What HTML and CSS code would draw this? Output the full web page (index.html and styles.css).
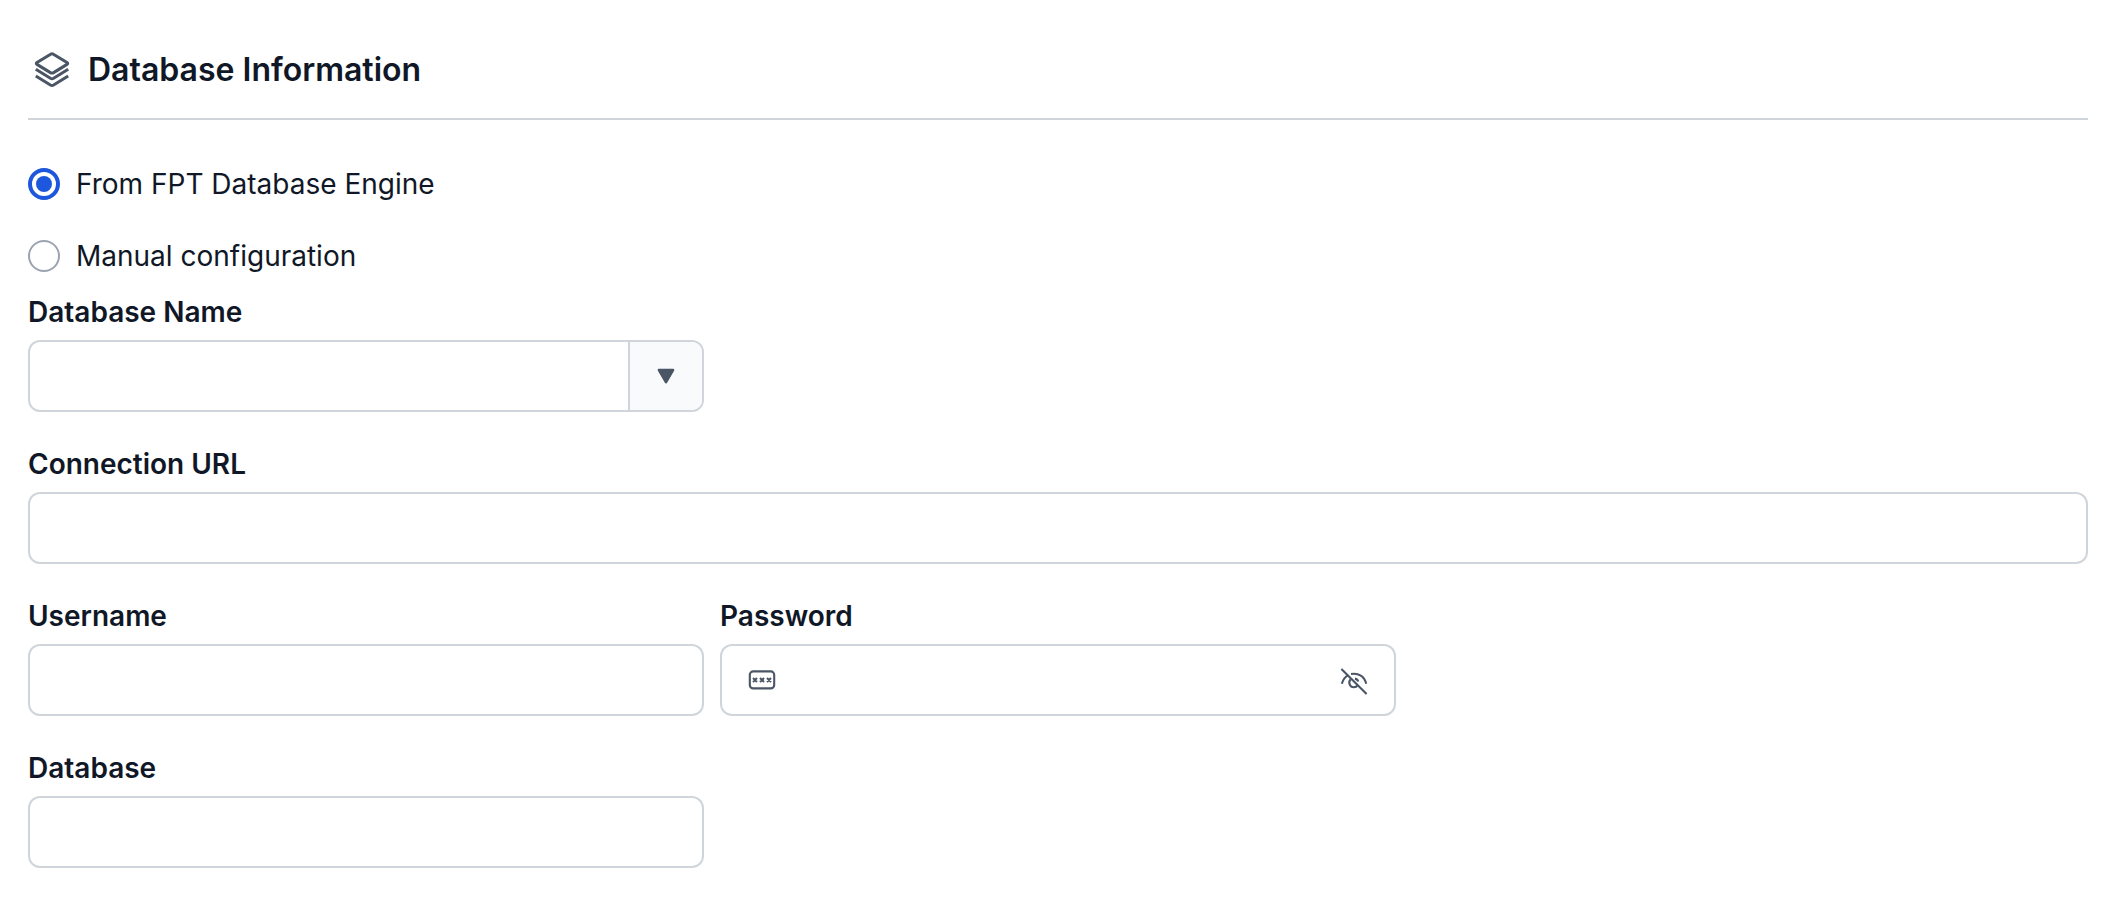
FILE: index.html
```html
<!DOCTYPE html>
<html lang="en">
<head>
  <meta charset="UTF-8">
  <title>Database Information</title>
  <link rel="stylesheet" href="styles.css">
</head>
<body>
  <form class="db-form">
    <header class="section-header">
      <svg class="layers-icon" viewBox="0 0 36 36">
        <path d="M16.6 2.2 Q18 1.3 19.4 2.2 L33 10.4 Q34.4 11.4 33 12.4 L19.6 20.6 Q18 21.5 16.4 20.6 L3 12.4 Q1.6 11.4 3 10.4 Z"/>
        <path d="M1.8 17.2 L16.4 26.2 Q18 27.1 19.6 26.2 L34.2 17.2"/>
        <path d="M1.8 24 L16.4 33 Q18 33.9 19.6 33 L34.2 24"/>
      </svg>
      <h1>Database Information</h1>
    </header>

    <!-- Source -->
    <div class="radio-group">
      <label class="radio"><input type="radio" name="source" checked>From FPT Database Engine</label>
      <label class="radio"><input type="radio" name="source">Manual configuration</label>
    </div>

    <!-- Connection details -->
    <div class="fields">
      <div class="field">
        <label for="dbName">Database Name</label>
        <div class="control">
          <input type="text" id="dbName">
          <button type="button" class="dropdown-button" aria-label="Open list">
            <svg class="arrow-icon" viewBox="0 0 18 16"><path d="M2 2 H16 L9 14.2 Z"/></svg>
          </button>
        </div>
      </div>
      <div class="field wide">
        <label for="url">Connection URL</label>
        <div class="control"><input type="text" id="url"></div>
      </div>
      <div class="field">
        <label for="username">Username</label>
        <div class="control"><input type="text" id="username"></div>
      </div>
      <div class="field">
        <label for="password">Password</label>
        <div class="control with-icons">
          <svg class="field-icon" viewBox="0 0 28 28">
            <rect x="1.8" y="5.4" width="24.4" height="17" rx="3.4"/>
            <path class="marks" d="M5 12 l4 4 m0 -4 l-4 4 M12 12 l4 4 m0 -4 l-4 4 M19 12 l4 4 m0 -4 l-4 4"/>
          </svg>
          <input type="password" id="password">
          <svg class="field-icon" viewBox="0 0 28 28">
            <path d="M1.4 2.9 L26.6 28.1"/>
            <path d="M1.8 17.7 C3 13.7 5.2 10.7 8.4 9.1"/>
            <path d="M11 8 C18.6 6.6 24.4 10.4 26.2 17.7"/>
            <path d="M10.6 13.2 C7.8 16.2 9.8 21.2 13.8 21.2 C15.6 21.2 16.8 20.6 17.6 19.4"/>
            <path d="M15 12.6 C16.6 12.9 17.8 14 18.2 15.6"/>
          </svg>
        </div>
      </div>
      <div class="field">
        <label for="database">Database</label>
        <div class="control"><input type="text" id="database"></div>
      </div>
    </div>
  </form>
</body>
</html>
```
FILE: styles.css
```css
* {
  box-sizing: border-box;
}
body {
  margin: 0;
  background-color: #fff;
  color: #101828;
  font-family: Inter, sans-serif;
  font-size: 28px;
  line-height: 40px;
}
.db-form {
  padding: 20px 22px 0 28px;
}
.section-header {
  display: flex;
  align-items: center;
  gap: 18px;
  height: 100px;
  padding: 2px 0 0 6px;
  border-bottom: 2px solid #d0d5dc;
}
.section-header h1 {
  margin: 0;
  font-size: 32px;
  font-weight: 600;
}
.layers-icon {
  width: 36px;
  height: 36px;
  fill: none;
  stroke: #4a5565;
  stroke-width: 3;
}
/* Source */
.radio-group {
  display: flex;
  flex-direction: column;
  gap: 32px;
  margin-top: 44px;
}
.radio {
  display: flex;
  align-items: center;
  gap: 16px;
}
.radio input {
  appearance: none;
  width: 32px;
  height: 32px;
  margin: 0;
  border: 2px solid #9da4b0;
  border-radius: 50%;
}
.radio input:checked {
  border: 4px solid #1d57dd;
  padding: 4px;
  background: #1d57dd content-box;
}
/* Connection details */
.fields {
  display: grid;
  grid-template-columns: 676px 676px 1fr;
  gap: 32px 16px;
  margin-top: 16px;
}
.field {
  grid-column: 1;
}
.field + .field:has(#password) {
  grid-column: 2;
}
.field.wide {
  grid-column: 1 / -1;
}
.field label {
  display: block;
  margin-bottom: 8px;
  font-weight: 600;
}
.control {
  display: flex;
  align-items: center;
  height: 72px;
  border: 2px solid #d0d5dc;
  border-radius: 12px;
  overflow: hidden;
}
.control input {
  flex: 1;
  min-width: 0;
  height: 100%;
  padding: 0 24px;
  border: none;
  outline: none;
  background: none;
  font: inherit;
  color: inherit;
}
.dropdown-button {
  display: flex;
  align-items: center;
  justify-content: center;
  width: 74px;
  height: 100%;
  padding: 0;
  border: none;
  border-left: 2px solid #d0d5dc;
  background-color: #f9fafc;
}
.arrow-icon {
  width: 18px;
  height: 16px;
  fill: #4a5565;
  stroke: #4a5565;
  stroke-width: 2.6;
  stroke-linejoin: round;
  overflow: visible;
}
.with-icons {
  padding: 0 26px;
}
.field-icon {
  width: 28px;
  height: 28px;
  fill: none;
  stroke: #4a5565;
  stroke-width: 2.1;
  overflow: visible;
}
.field-icon .marks {
  stroke-width: 2;
}
```
